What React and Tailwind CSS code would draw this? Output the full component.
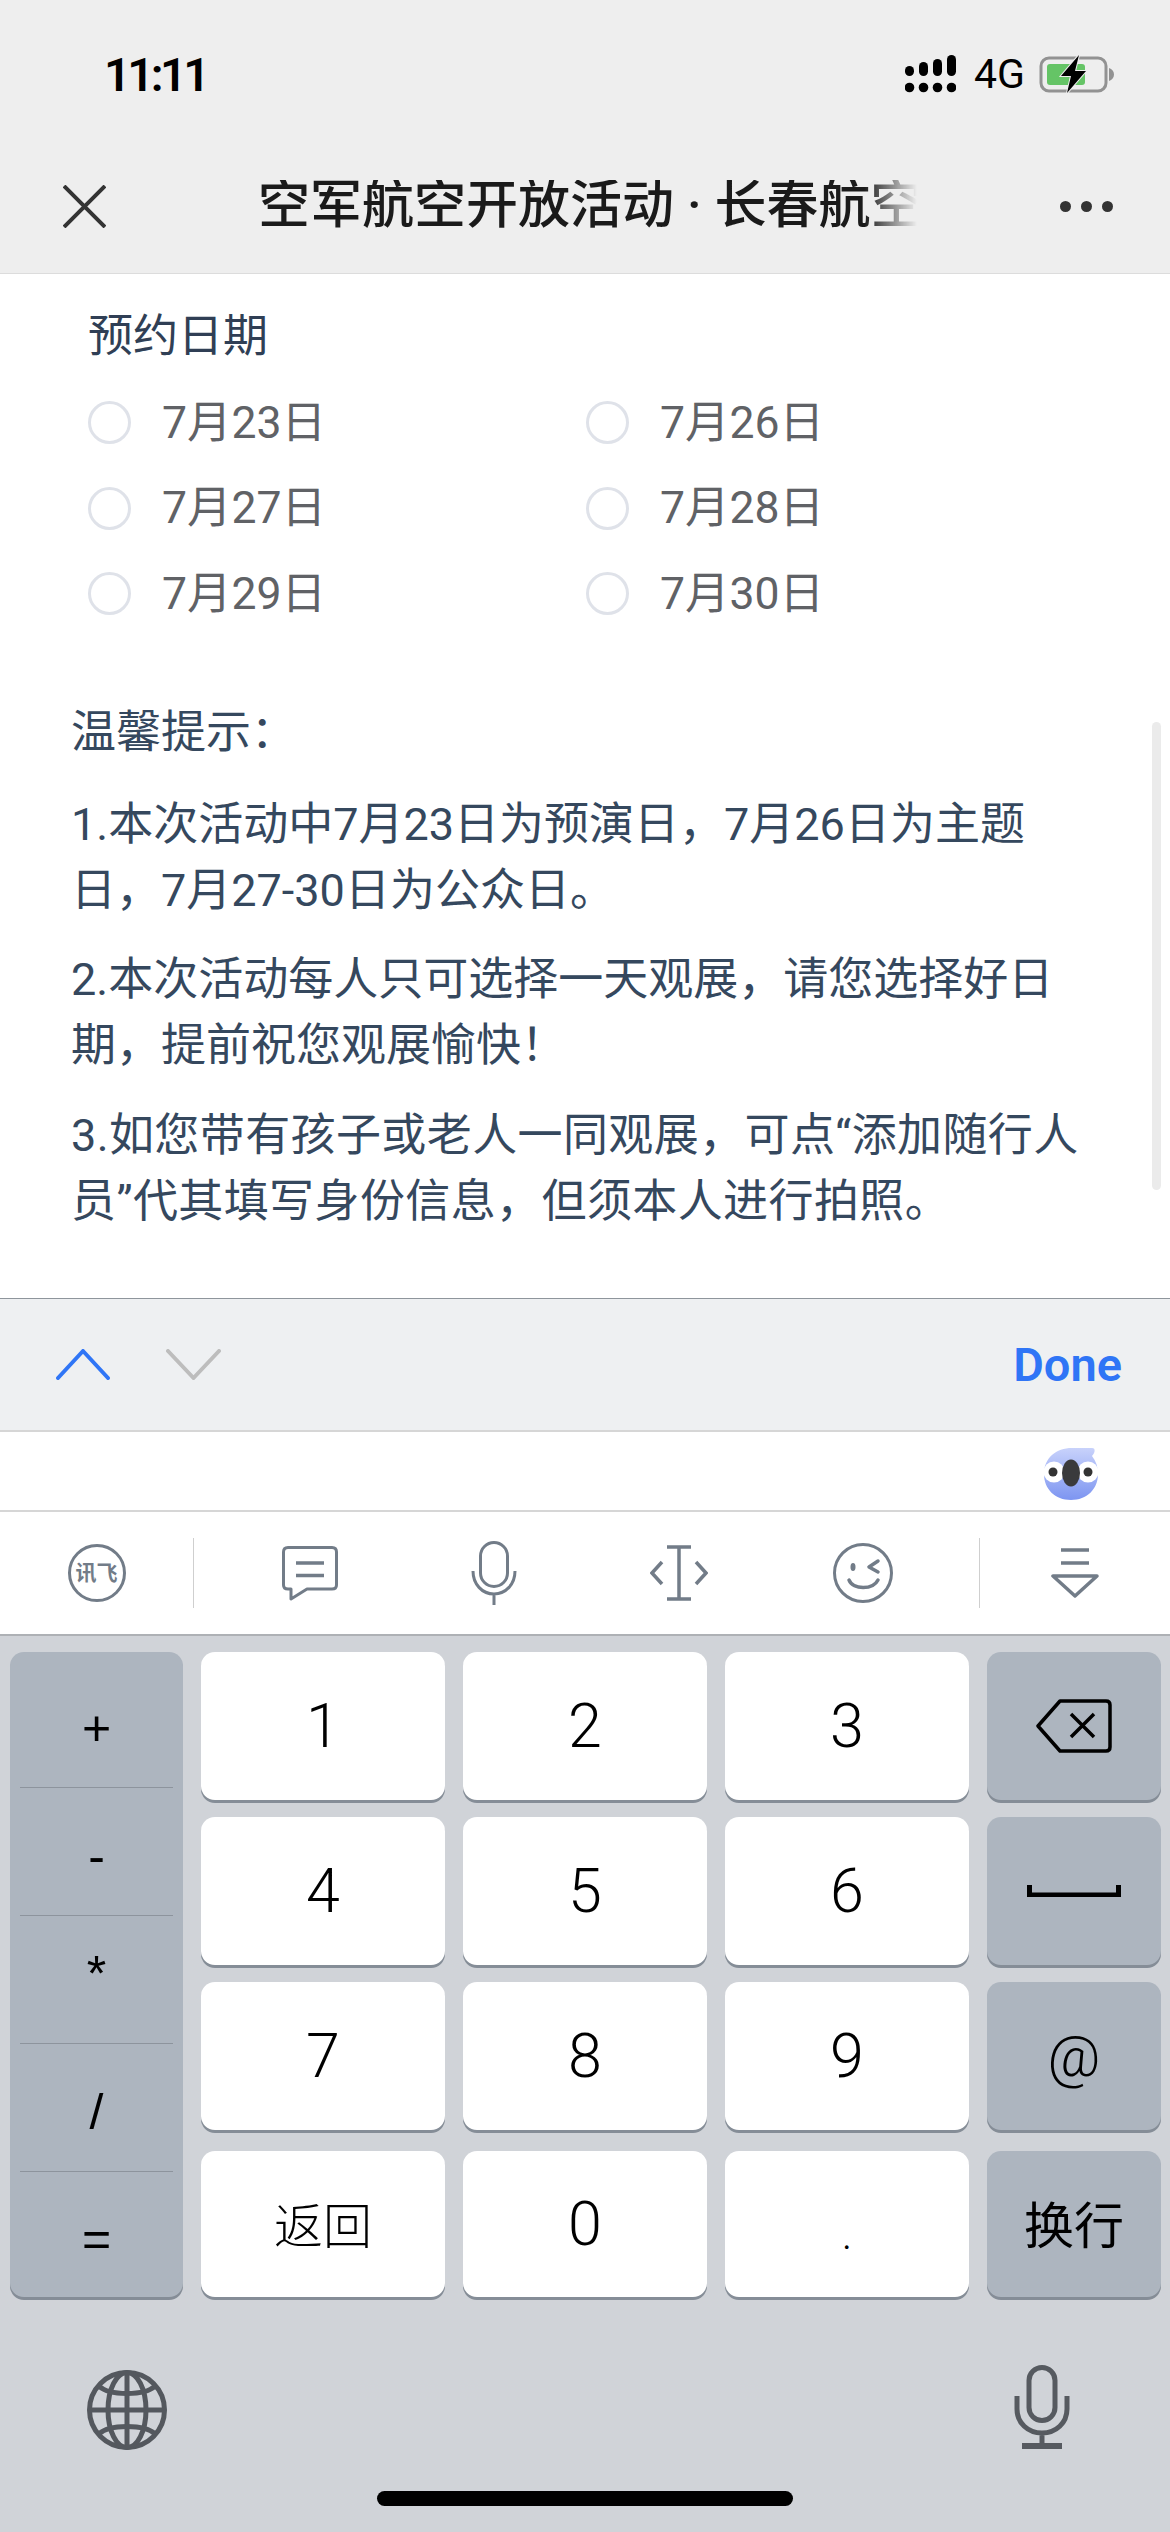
import { Fragment } from 'react';

const dates = ['7月23日', '7月26日', '7月27日', '7月28日', '7月29日', '7月30日'];

const symbols = [
  { label: '+', cls: 'h-[136px] pt-4 text-[50px]' },
  { label: '-', cls: 'h-[128px] pt-2 text-[50px]' },
  { label: '*', cls: 'h-[128px] pb-3 text-[50px]' },
  { label: '/', cls: 'h-[128px] pt-2 text-[50px]' },
];

function Key({ children, className = 'h-[148px]' }) {
  return (
    <div className={`flex items-center justify-center rounded-[14px] bg-white text-[61px] font-light leading-none text-black shadow-[0_3px_0_#858d97] ${className}`}>
      {children}
    </div>
  );
}

function SideKey({ children, className = 'h-[148px]' }) {
  return (
    <div className={`flex items-center justify-center rounded-[14px] bg-[#adb5bf] leading-none text-black shadow-[0_3px_0_#858d97] ${className}`}>
      {children}
    </div>
  );
}

function StatusBar() {
  return (
    <div className="flex h-[148px] items-center pl-[104px] pr-[55px]">
      <span className="text-[47px] font-semibold leading-none tracking-[-3.5px] text-black">11:11</span>
      <div className="ml-auto flex items-center">
        <svg width="51" height="38" viewBox="907 56 51 38" fill="#000">
          <rect x="907" y="67" width="9" height="10" rx="4.5" />
          <rect x="921" y="63" width="9" height="14" rx="4.5" />
          <rect x="935" y="60" width="9" height="17" rx="4.5" />
          <rect x="949" y="56" width="9" height="21" rx="4.5" />
          <circle cx="911.5" cy="88.5" r="4.8" />
          <circle cx="925.5" cy="88.5" r="4.8" />
          <circle cx="939.5" cy="88.5" r="4.8" />
          <circle cx="953.5" cy="88.5" r="4.8" />
        </svg>
        <span className="ml-[18px] w-[65px] text-[41px] leading-none text-black">4G</span>
        <svg width="76" height="42" viewBox="1040 53 76 42">
          <rect x="1042" y="58" width="65" height="33" rx="8" fill="none" stroke="#929292" strokeWidth="3" />
          <rect x="1048" y="64" width="38" height="21" rx="3" fill="#65c466" />
          <path d="M1110 68c3 1 5 3.5 5 6.5s-2 5.5-5 6.5z" fill="#929292" />
          <path d="M1080 55 L1062 76 L1072 76 L1068 93 L1087 71 L1076 71 Z" fill="#000" stroke="#eeeeee" strokeWidth="2" paintOrder="stroke" />
        </svg>
      </div>
    </div>
  );
}

function NavBar() {
  return (
    <div className="flex h-[116px] items-center pl-[63px] pr-[57px]">
      <svg width="43" height="43" viewBox="0 0 43 43" stroke="#333" strokeWidth="4">
        <path d="M1 1 L42 42 M42 1 L1 42" />
      </svg>
      <div className="ml-[152px] w-[659px] overflow-hidden whitespace-nowrap text-[52px] font-medium leading-none text-[#1a1a1a] [mask-image:linear-gradient(to_right,black_92%,transparent)]">
        空军航空开放活动 · 长春航空
      </div>
      <div className="ml-auto flex gap-[10px]">
        <span className="h-[11px] w-[11px] rounded-full bg-[#333]"></span>
        <span className="h-[11px] w-[11px] rounded-full bg-[#333]"></span>
        <span className="h-[11px] w-[11px] rounded-full bg-[#333]"></span>
      </div>
    </div>
  );
}

function Form() {
  return (
    <div className="relative h-[1024px] overflow-hidden bg-white pt-[30px]">
      <div className="pl-[88px] text-[45px] leading-[66px] text-[#303f55]">预约日期</div>
      <div className="mt-[10px] grid grid-cols-[498px_1fr] pl-[88px]">
        {dates.map((d) => (
          <div key={d} className="flex h-[85.5px] items-center">
            <span className="h-[43px] w-[43px] rounded-full border-[3px] border-[#dfe2e9]"></span>
            <span className="ml-[31px] text-[44.5px] leading-none text-[#606266]">{d}</span>
          </div>
        ))}
      </div>
      <div className="mt-[63px] pl-[71px] text-[45px] leading-[66px] text-[#35485e]">
        <p>温馨提示：</p>
        <p className="mt-[26px]">1.本次活动中7月23日为预演日，7月26日为主题<br />日，7月27-30日为公众日。</p>
        <p className="mt-[23px]">2.本次活动每人只可选择一天观展，请您选择好日<br />期，提前祝您观展愉快！</p>
        <p className="mt-[24px] tracking-[0.4px]">3.如您带有孩子或老人一同观展，可点“添加随行人<br />员”代其填写身份信息，但须本人进行拍照。</p>
      </div>
      {/* scrollbar */}
      <div className="absolute left-[1152px] top-[448px] h-[468px] w-[9px] rounded-full bg-[#ebebeb]"></div>
    </div>
  );
}

function Toolbar() {
  return (
    <div className="flex h-[134px] items-center border-t border-b-2 border-t-[#8e959c] border-b-[#d6d6d6] bg-[#eef0f2] pl-[56px] pr-[48px]">
      <svg width="54" height="31" viewBox="0 0 54 31" fill="none" stroke="#2f75f6" strokeWidth="4" strokeLinecap="round" strokeLinejoin="round">
        <path d="M2 29 L27 2 L52 29" />
      </svg>
      <svg className="ml-[56px]" width="55" height="31" viewBox="0 0 55 31" fill="none" stroke="#bdbdbd" strokeWidth="4" strokeLinecap="round" strokeLinejoin="round">
        <path d="M2 2 L27.5 29 L53 2" />
      </svg>
      <span className="ml-auto text-[47px] font-semibold leading-none text-[#2f75f6]">Done</span>
    </div>
  );
}

function Koala() {
  return (
    <svg width="56" height="54" viewBox="0 0 56 54">
      <defs>
        <linearGradient id="koala" x1="0" y1="0" x2="0" y2="1">
          <stop offset="0" stopColor="#c8d2fb" />
          <stop offset="1" stopColor="#7d95f1" />
        </linearGradient>
      </defs>
      <path d="M1 27 C1 11 13 1 29 1 L49 1 C53 1 52 6 49 9 C53 14 55 20 55 27 C55 42 44 53 28 53 C12 53 1 42 1 27 Z" fill="url(#koala)" />
      <circle cx="11" cy="25" r="10.5" fill="#fff" />
      <circle cx="45" cy="25" r="10.5" fill="#fff" />
      <circle cx="10" cy="25" r="4.5" fill="#333" />
      <circle cx="45" cy="25" r="4.5" fill="#333" />
      <ellipse cx="28" cy="26" rx="9" ry="13.5" fill="#3a3a3c" />
    </svg>
  );
}

function ImeBar() {
  return (
    <div className="grid h-[124px] grid-cols-[193px_1px_785px_1px_1fr] items-center border-b-2 border-b-[#aeb1b5] bg-white">
      <div className="flex justify-center">
        <div className="flex h-[58px] w-[58px] items-center justify-center rounded-full border-[3px] border-[#727c88] text-[21px] font-bold leading-none text-[#727c88]">
          讯飞
        </div>
      </div>
      <div className="h-[70px] bg-[#cfcfcf]"></div>
      <div className="grid grid-cols-4 items-center justify-items-center px-[24px]">
        <svg width="56" height="55" viewBox="0 0 56 55" fill="none" stroke="#727c88" strokeWidth="3" strokeLinejoin="round">
          <path d="M6 1.5 H50 Q54.5 1.5 54.5 6 V39 Q54.5 43 50 43 H25 L9 53 V43 H6 Q1.5 43 1.5 39 V6 Q1.5 1.5 6 1.5 Z" />
          <path d="M14 17 H42 M14 29.5 H42" strokeWidth="3.5" />
        </svg>
        <svg width="46" height="65" viewBox="0 0 46 65" fill="none" stroke="#727c88" strokeWidth="3">
          <rect x="9.5" y="1.5" width="27" height="44" rx="13.5" />
          <path d="M2 30 C2 43 11 53 23 53 C35 53 44 43 44 30 M23 53 V64" />
        </svg>
        <svg width="58" height="56" viewBox="0 0 58 56" fill="none" stroke="#727c88" strokeWidth="3.5">
          <path d="M17 2 H41 M17 54 H41 M29 2 V54" />
          <path d="M12 17 L2 28 L12 39 M46 17 L56 28 L46 39" />
        </svg>
        <svg width="60" height="60" viewBox="0 0 60 60" fill="none" stroke="#727c88" strokeWidth="3">
          <circle cx="30" cy="30" r="28.5" />
          <ellipse cx="20" cy="24" rx="2.5" ry="4" fill="#727c88" stroke="none" />
          <path d="M45 18 L36 24 L45 29" strokeWidth="3.5" strokeLinecap="round" strokeLinejoin="round" />
          <path d="M16 37 C20 47 40 47 45 37" strokeLinecap="round" strokeWidth="3.5" />
        </svg>
      </div>
      <div className="h-[70px] bg-[#cfcfcf]"></div>
      <div className="flex justify-center">
        <svg width="48" height="50" viewBox="0 0 48 50" fill="none" stroke="#727c88" strokeWidth="3.5" strokeLinejoin="round">
          <path d="M10 2 H38 M10 15 H38" />
          <path d="M2 28 H46 L24 48 Z" />
        </svg>
      </div>
    </div>
  );
}

function Keypad() {
  return (
    <div className="grid grid-cols-[173px_244px_244px_244px_174px] grid-rows-[165px_165px_169px_146px] gap-x-[18px] pl-[10px] pt-[16px] font-['Roboto','Noto_Sans_CJK_SC',sans-serif]">
      <div className="row-span-4 flex h-[645px] flex-col rounded-[14px] bg-[#adb5bf] px-[10px] font-['Liberation_Sans',sans-serif] leading-none text-black shadow-[0_3px_0_#858d97]">
        {symbols.map((s) => (
          <div key={s.label} className={`flex items-center justify-center border-b border-[#8d949d] ${s.cls}`}>{s.label}</div>
        ))}
        <div className="flex flex-1 items-center justify-center pt-2 text-[50px]">=</div>
      </div>

      <Key>1</Key>
      <Key>2</Key>
      <Key>3</Key>
      <SideKey>
        <svg width="76" height="54" viewBox="0 0 76 54" fill="none" stroke="#000" strokeWidth="3.5" strokeLinejoin="round">
          <path d="M24 2 H70 Q74 2 74 6 V48 Q74 52 70 52 H24 L2 27 Z" />
          <path d="M35 15 L58 38 M58 15 L35 38" />
        </svg>
      </SideKey>

      <Key>4</Key>
      <Key>5</Key>
      <Key>6</Key>
      <SideKey>
        <svg width="94" height="12" viewBox="0 0 94 12" fill="none" stroke="#000">
          <path d="M2.5 0 V10 H91.5 V0" strokeWidth="5" />
        </svg>
      </SideKey>

      <Key>7</Key>
      <Key>8</Key>
      <Key>9</Key>
      <SideKey className="h-[148px] text-[58px] font-light">@</SideKey>

      <Key className="h-[146px]"><span className="pb-1 text-[49px] font-['Noto_Sans_CJK_SC',sans-serif] font-light">返回</span></Key>
      <Key className="h-[146px]">0</Key>
      <Key className="h-[146px]"><span className="pt-5 text-[44px]">.</span></Key>
      <SideKey className="h-[146px] text-[50px]"><span className="pb-1 font-['Noto_Sans_CJK_SC',sans-serif]">换行</span></SideKey>
    </div>
  );
}

function KeyboardBottom() {
  return (
    <Fragment>
      <div className="mt-[68px] flex h-[84px] items-start justify-between pl-[87px] pr-[100px]">
        <svg className="mt-[5px]" width="80" height="80" viewBox="0 0 80 80" fill="none" stroke="#54585e" strokeWidth="5">
          <circle cx="40" cy="40" r="37.5" />
          <ellipse cx="40" cy="40" rx="19" ry="37.5" />
          <path d="M40 2 V78 M2 40 H78" />
          <path d="M12 16 C22 26 58 26 68 16 M12 64 C22 54 58 54 68 64" />
        </svg>
        <svg width="56" height="84" viewBox="0 0 56 84" fill="none" stroke="#565a60" strokeWidth="5">
          <rect x="15" y="2.5" width="26" height="53" rx="13" />
          <path d="M3 31 V44 C3 58 14 68 28 68 C42 68 53 58 53 44 V31 M28 68 V80" />
          <path d="M8 81 H48" strokeWidth="6" />
        </svg>
      </div>
      <div className="mx-auto mt-[42px] h-[15px] w-[416px] rounded-full bg-black"></div>
    </Fragment>
  );
}

export default function App() {
  return (
    <div className="h-[2532px] w-[1170px] overflow-hidden bg-[#d0d3d8] font-['Roboto','Noto_Sans_CJK_SC',sans-serif]">
      <div className="h-[274px] border-b border-[#dcdcdc] bg-[#eeeeee]">
        <StatusBar />
        <NavBar />
      </div>
      <Form />
      <Toolbar />
      <div className="flex h-[80px] items-center justify-end border-b-2 border-b-[#d6d6d6] bg-white pr-[71px] pt-[6px]">
        <Koala />
      </div>
      <ImeBar />
      <Keypad />
      <KeyboardBottom />
    </div>
  );
}
